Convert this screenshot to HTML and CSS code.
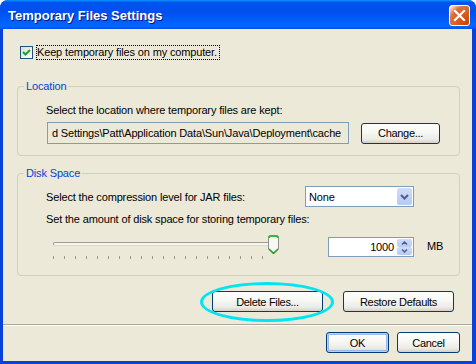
FILE: index.html
```html
<!DOCTYPE html>
<html>
<head>
    <title>Temporary Files Settings</title>
    <meta charset="utf-8">
    <link rel="stylesheet" href="styles.css">
</head>
<body>
<div class="window">
    <div class="titlebar">
        <span class="title">Temporary Files Settings</span>
        <span class="close">
            <svg width="13" height="13" viewBox="0 0 13 13"><path d="M2 2 L11 11 M11 2 L2 11" stroke="#fff" stroke-width="2.2" stroke-linecap="square"/></svg>
        </span>
    </div>

    <div class="content">
        <div class="keep">
            <span class="checkbox">
                <svg width="11" height="11" viewBox="0 0 11 11"><path d="M2 5 L4.5 7.5 L9 3" stroke="#21a121" stroke-width="2" fill="none"/></svg>
            </span>
            <span class="focus">Keep temporary files on my computer.</span>
        </div>

        <fieldset class="group location">
            <legend>Location</legend>
            <div class="line">Select the location where temporary files are kept:</div>
            <div class="row">
                <div class="path">d Settings\Patt\Application Data\Sun\Java\Deployment\cache</div>
                <button class="btn change">Change...</button>
            </div>
        </fieldset>

        <fieldset class="group disk">
            <legend>Disk Space</legend>
            <div class="row">
                <span class="grow">Select the compression level for JAR files:</span>
                <div class="combo">
                    <span>None</span>
                    <span class="drop">
                        <svg width="9" height="6" viewBox="0 0 9 6"><path d="M1 1 L4.5 4.5 L8 1" stroke="#4d6185" stroke-width="2" fill="none"/></svg>
                    </span>
                </div>
            </div>
            <div class="line second">Set the amount of disk space for storing temporary files:</div>
            <div class="row slide-row">
                <div class="slider">
                    <div class="track"></div>
                    <div class="ticks"></div>
                    <svg class="thumb" width="11" height="20" viewBox="0 0 11 20">
                        <path d="M0.5 3 Q0.5 0.5 3 0.5 H8 Q10.5 0.5 10.5 3 V14 L5.5 19 L0.5 14 Z" fill="#f7f7f4" stroke="#8e8f8f"/>
                        <path d="M1 3 Q1 1 3 1 H8 Q10 1 10 3" stroke="#3bb53b" stroke-width="2" fill="none"/>
                        <path d="M1 14 L5.5 18.3 L10 14" stroke="#21a121" stroke-width="1.5" fill="none"/>
                    </svg>
                </div>
                <div class="spinner">
                    <span class="value">1000</span>
                    <span class="arrows">
                        <span class="half">
                            <svg width="7" height="4" viewBox="0 0 7 4"><path d="M1 3.5 L3.5 1 L6 3.5" stroke="#4d6185" stroke-width="1.5" fill="none"/></svg>
                        </span>
                        <span class="half">
                            <svg width="7" height="4" viewBox="0 0 7 4"><path d="M1 0.5 L3.5 3 L6 0.5" stroke="#4d6185" stroke-width="1.5" fill="none"/></svg>
                        </span>
                    </span>
                </div>
                <span class="unit">MB</span>
            </div>
        </fieldset>

        <div class="actions">
            <span class="marked">
                <button class="btn wide">Delete Files...</button>
                <span class="ring"></span>
            </span>
            <button class="btn wide">Restore Defaults</button>
        </div>

        <div class="separator"></div>

        <div class="footer">
            <button class="btn small default">OK</button>
            <button class="btn small">Cancel</button>
        </div>
    </div>
</div>
</body>
</html>
```

FILE: styles.css
```css
body {
    margin: 0;
    padding: 0;
    font: 11px "Liberation Sans", Arial, sans-serif;
    letter-spacing: -0.15px;
    color: #000;
    background: #fff;
}

.window {
    width: 476px;
    height: 364px;
    box-sizing: border-box;
    background: #0842d6;
    border-radius: 8px 8px 0 0;
    display: flex;
    flex-direction: column;
}

.titlebar {
    height: 29px;
    flex: none;
    display: flex;
    align-items: center;
    padding: 0 5px 0 8px;
    border-radius: 8px 8px 0 0;
    background: linear-gradient(180deg, #0997ff, #0053ee 8%, #0050ee 40%, #0066ff 88%, #0066ff 93%, #005bff 95%, #0053ee 96%, #0053ee);
}

.title {
    flex: 1;
    color: #fff;
    font: bold 13px "Liberation Sans", Arial, sans-serif;
    letter-spacing: 0;
    text-shadow: 1px 1px #0f1089;
    margin-top: 1px;
}

.close {
    width: 19px;
    height: 19px;
    border: 1px solid #fff;
    border-radius: 3px;
    display: flex;
    align-items: center;
    justify-content: center;
    background: radial-gradient(circle at 90% 90%, #cc4600 0, #dc6527 55%, #cd7546 70%, #ffccb2 90%, #fff 100%);
    margin: 1px 1px 0 0;
}

.content {
    flex: 1;
    margin: 0 4px 3px 3px;
    background: #ece9d8;
    display: flex;
    flex-direction: column;
}

.keep {
    display: flex;
    align-items: center;
    height: 15px;
    margin: 16px 0 0 17px;
}

.checkbox {
    width: 11px;
    height: 11px;
    border: 1px solid #1c5180;
    background: linear-gradient(135deg, #dcdcd7, #fff);
    display: flex;
    align-items: center;
    justify-content: center;
    margin-right: 3px;
}

.focus {
    border: 1px dotted #000;
    padding: 0 2px 0 0;
    line-height: 13px;
    white-space: nowrap;
}

.group {
    margin: 20px 12px 0 14px;
    padding: 0 0 11px 28px;
    border: 1px solid #d0d0bf;
    border-radius: 4px;
    min-width: 0;
}

.group legend {
    color: #0046d5;
    line-height: 13px;
    padding: 0 2px;
    margin-left: -22px;
}

.line {
    line-height: 13px;
    margin-top: 11px;
    white-space: nowrap;
}

.row {
    display: flex;
    align-items: center;
}

.row > * {
    flex: none;
}

.location .row {
    margin-top: 5px;
}

.path {
    width: 296px;
    height: 20px;
    border: 1px solid #7f9db9;
    background: #ece9d8;
    display: flex;
    align-items: center;
    white-space: nowrap;
    padding: 0 0 0 4px;
    margin-left: 1px;
    box-sizing: content-box;
}

.btn {
    height: 21px;
    box-sizing: border-box;
    border: 1px solid #003c74;
    border-radius: 3px;
    background: linear-gradient(180deg, #fff, #f7f7f3 45%, #ecebe5 80%, #d6d0c5);
    font: 11px "Liberation Sans", Arial, sans-serif;
    letter-spacing: -0.3px;
    color: #000;
    padding: 0;
}

.change {
    width: 79px;
    margin-left: 12px;
}

.disk {
    margin-top: 11px;
    padding: 0 45px 15px 28px;
}

.disk .row:first-of-type {
    margin-top: 6px;
}

.row > .grow {
    flex: 1;
}

.combo {
    width: 104px;
    height: 19px;
    border: 1px solid #7f9db9;
    background: #fff;
    display: flex;
    align-items: center;
    padding-left: 3px;
    box-sizing: content-box;
}

.combo span:first-child {
    flex: 1;
}

.drop {
    width: 15px;
    height: 17px;
    margin-right: 1px;
    border-radius: 2px;
    background: linear-gradient(180deg, #d0dcfa, #b7c9f5);
    display: flex;
    align-items: center;
    justify-content: center;
}

.second {
    margin-top: 6px;
}

.slide-row {
    align-items: flex-start;
    margin-top: 9px;
}

.slider {
    position: relative;
    width: 227px;
    height: 25px;
    margin-left: 7px;
}

.track {
    position: absolute;
    left: 0;
    top: 7px;
    width: 219px;
    height: 2px;
    border-top: 1px solid #9d9d92;
    border-bottom: 1px solid #dcdad0;
    border-left: 1px solid #9d9d92;
    border-radius: 2px 0 0 2px;
    background: #f7f6ee;
}

.ticks {
    position: absolute;
    left: 0;
    top: 21px;
    width: 211px;
    height: 3px;
    background: repeating-linear-gradient(to right, #9c9a8c 0 1px, transparent 1px 11px);
}

.thumb {
    position: absolute;
    left: 215px;
    top: 0;
}

.spinner {
    width: 84px;
    height: 18px;
    border: 1px solid #7f9db9;
    background: #fff;
    display: flex;
    align-items: center;
    margin: 2px 0 0 48px;
    box-sizing: content-box;
}

.value {
    flex: 1;
    text-align: right;
    padding-right: 3px;
}

.arrows {
    display: flex;
    flex-direction: column;
    width: 15px;
    height: 16px;
    margin-right: 1px;
}

.half {
    flex: 1;
    display: flex;
    align-items: center;
    justify-content: center;
    border-radius: 2px;
    background: linear-gradient(180deg, #d0dcfa, #b7c9f5);
}

.unit {
    margin: 5px 0 0 13px;
}

.actions {
    display: flex;
    justify-content: flex-end;
    gap: 20px;
    margin: 15px 18px 0 0;
}

.wide {
    width: 111px;
}

.marked {
    position: relative;
    display: flex;
}

.ring {
    position: absolute;
    left: -12px;
    top: -9px;
    width: 128px;
    height: 34px;
    border: 3px solid #00e4f4;
    border-radius: 50%;
}

.separator {
    margin-top: 12px;
    border-top: 1px solid #aca899;
    border-bottom: 1px solid #fff;
}

.footer {
    display: flex;
    justify-content: flex-end;
    gap: 8px;
    margin: 6px 12px 0 0;
}

.small {
    width: 63px;
}

.default {
    box-shadow: inset 0 0 0 1px #bccff5, inset 0 0 0 2px #9ab6ea;
}
```
